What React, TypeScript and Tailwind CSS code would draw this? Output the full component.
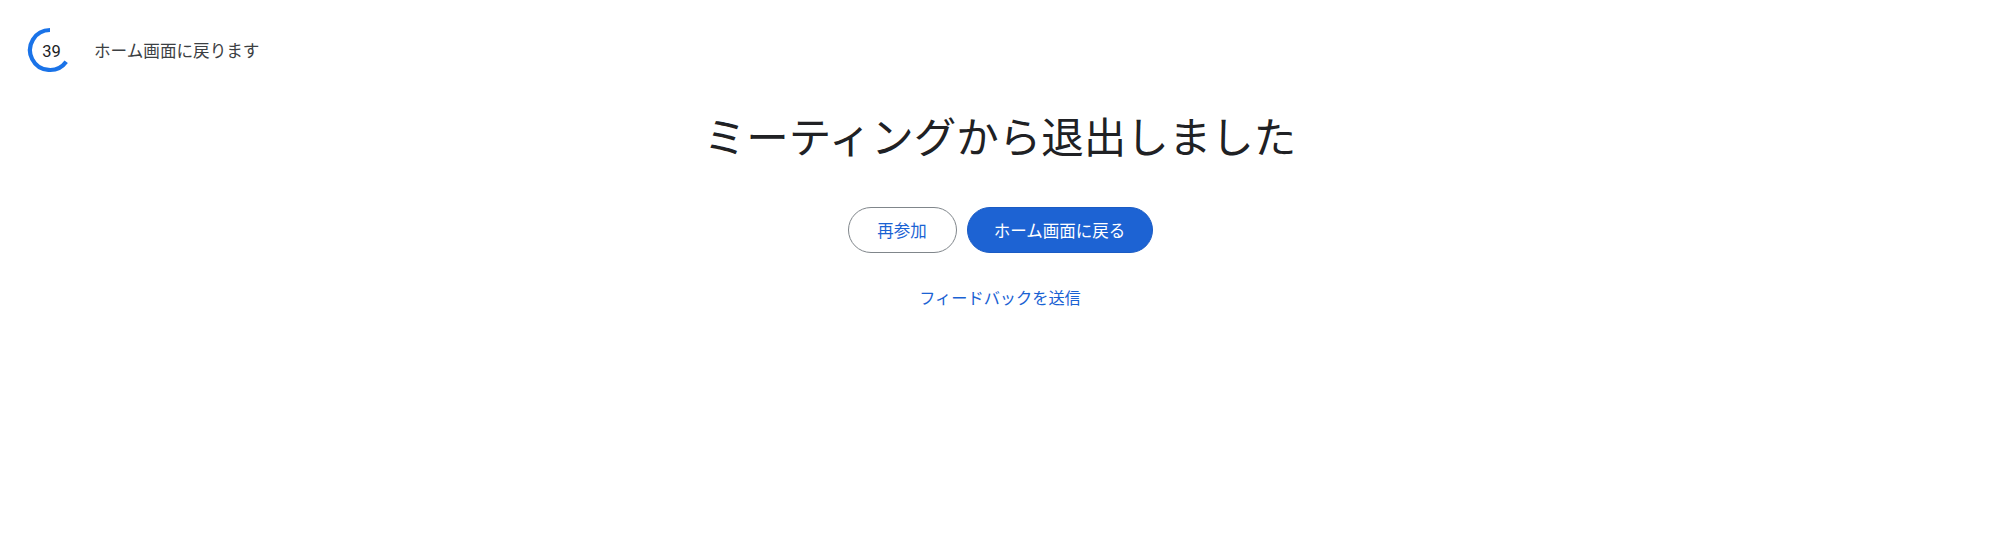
import { useState } from "react";

const TOTAL = 60;

function Countdown({ seconds }: { seconds: number }) {
  // arc starts at 12 o'clock and runs counter-clockwise
  const r = 20;
  const c = 23;
  const sweep = (seconds / TOTAL) * 360;
  const end = ((-90 - sweep) * Math.PI) / 180;
  const ex = c + r * Math.cos(end);
  const ey = c + r * Math.sin(end);
  const large = sweep > 180 ? 1 : 0;

  return (
    <div className="relative w-[46px] h-[46px]">
      <svg width="46" height="46" viewBox="0 0 46 46" className="absolute inset-0">
        <path
          d={`M${c} ${c - r} A${r} ${r} 0 ${large} 0 ${ex.toFixed(2)} ${ey.toFixed(2)}`}
          fill="none"
          stroke="#1a73e8"
          strokeWidth={4.2}
        />
      </svg>
      <span className="absolute inset-0 pt-[4px] pl-[3px] flex items-center justify-center text-[16.5px] text-[#202124] font-['Roboto','Liberation_Sans',sans-serif]">
        {seconds}
      </span>
    </div>
  );
}

export default function App() {
  const [seconds] = useState(39);

  return (
    <div className="w-full h-[553px] bg-white font-['Noto_Sans_CJK_JP','Noto_Sans',sans-serif] text-[#202124]">
      <header className="pt-[27px] pl-[27px] flex items-center gap-[21px] h-[73px]">
        <Countdown seconds={seconds} />
        <span className="text-[16.6px] leading-6 text-[#3c4043]">
          ホーム画面に戻ります
        </span>
      </header>

      <main className="flex flex-col items-center">
        <h1 className="mt-[36px] text-[42.5px] leading-[52px] font-normal text-[#202124]">
          ミーティングから退出しました
        </h1>

        <div className="mt-[46px] flex items-center gap-[10px]">
          <button
            type="button"
            className="w-[109px] h-[46px] rounded-full border border-[#80868b] bg-white text-[16.5px] text-[#1a62d3]"
          >
            再参加
          </button>
          <button
            type="button"
            className="w-[186px] h-[46px] rounded-full border border-[#1a5bc4] bg-[#1d63d3] text-[16.5px] text-white"
          >
            ホーム画面に戻る
          </button>
        </div>

        <a href="#" className="mt-[32px] text-[16.2px] leading-6 text-[#1a62d3]">
          フィードバックを送信
        </a>
      </main>
    </div>
  );
}
